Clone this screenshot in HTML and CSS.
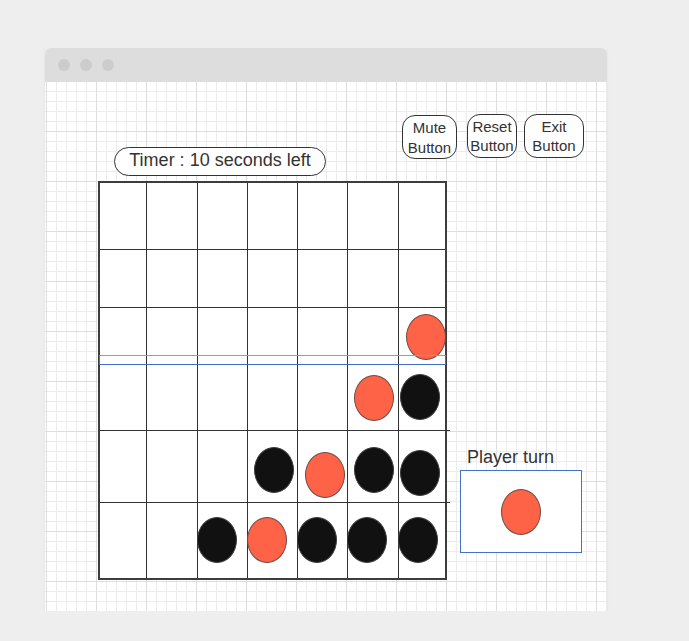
FILE: index.html
```html
<!DOCTYPE html>
<html lang="en">
<head>
  <meta charset="UTF-8">
  <meta name="viewport" content="width=689, initial-scale=1.0">
  <title>Connect Four - Wireframe</title>
  <link rel="stylesheet" href="styles.css">
</head>
<body>
  <div class="window">
    <div class="titlebar">
      <span class="dot"></span>
      <span class="dot"></span>
      <span class="dot"></span>
    </div>
    <div class="canvas">
      <div class="header">
        <div class="timer">Timer : 10 seconds left</div>
        <div class="actions">
          <button type="button" class="btn mute">Mute<br>Button</button>
          <button type="button" class="btn reset">Reset<br>Button</button>
          <button type="button" class="btn exit">Exit<br>Button</button>
        </div>
      </div>
      <div class="game">
        <div class="board">
          <div class="row r1">
            <div class="cell"></div><div class="cell"></div><div class="cell"></div><div class="cell"></div><div class="cell"></div><div class="cell"></div><div class="cell"></div>
          </div>
          <div class="row r2">
            <div class="cell"></div><div class="cell"></div><div class="cell"></div><div class="cell"></div><div class="cell"></div><div class="cell"></div><div class="cell"></div>
          </div>
          <div class="row r3">
            <div class="cell"></div><div class="cell"></div><div class="cell"></div><div class="cell"></div><div class="cell"></div><div class="cell"></div>
            <div class="cell"><span class="piece red"></span></div>
          </div>
          <div class="row r4">
            <div class="cell"></div><div class="cell"></div><div class="cell"></div><div class="cell"></div><div class="cell"></div>
            <div class="cell"><span class="piece red"></span></div>
            <div class="cell"><span class="piece black edge"></span></div>
          </div>
          <div class="row r5">
            <div class="cell"></div><div class="cell"></div><div class="cell"></div>
            <div class="cell"><span class="piece black"></span></div>
            <div class="cell"><span class="piece red low"></span></div>
            <div class="cell"><span class="piece black"></span></div>
            <div class="cell"><span class="piece black edge"></span></div>
          </div>
          <div class="row r6">
            <div class="cell"></div><div class="cell"></div>
            <div class="cell"><span class="piece black"></span></div>
            <div class="cell"><span class="piece red"></span></div>
            <div class="cell"><span class="piece black"></span></div>
            <div class="cell"><span class="piece black"></span></div>
            <div class="cell"><span class="piece black"></span></div>
          </div>
          <!-- selected drop row -->
          <div class="selection"></div>
        </div>
        <div class="turn">
          <div class="turn-label">Player turn</div>
          <div class="turn-box"><span class="piece red"></span></div>
        </div>
      </div>
    </div>
  </div>
</body>
</html>
```

FILE: styles.css
```css
body {
  margin: 0;
  background: #eeeeee;
  font-family: "Liberation Sans", Arial, Helvetica, sans-serif;
  color: #333;
}
.window {
  width: 562px;
  margin: 48px 0 0 45px;
  box-shadow: 0 1px 2px rgba(0, 0, 0, 0.08);
}
.titlebar {
  height: 33px;
  background: #dddddd;
  border-radius: 6px 6px 0 0;
  display: flex;
  align-items: center;
  gap: 10px;
  padding-left: 13px;
}
.dot {
  width: 12px;
  height: 12px;
  border-radius: 50%;
  background: #cccccc;
}
.canvas {
  height: 530px;
  box-sizing: border-box;
  padding: 33px 23px 0 53px;
  background-color: #fff;
  background-image:
    linear-gradient(to right, #dedede 1px, transparent 1px),
    linear-gradient(to bottom, #dedede 1px, transparent 1px),
    linear-gradient(to right, #ececec 1px, transparent 1px),
    linear-gradient(to bottom, #ececec 1px, transparent 1px);
  background-size: 50px 50px, 50px 50px, 10px 10px, 10px 10px;
  background-position: 1px 0;
}
.header {
  display: flex;
  align-items: flex-start;
}
.timer {
  margin: 33px 0 0 16px;
  width: 212px;
  height: 29px;
  box-sizing: border-box;
  border: 1px solid #333;
  border-radius: 15px;
  background: #fff;
  font-size: 18px;
  line-height: 25px;
  padding-bottom: 2px;
  text-align: center;
}
.actions {
  margin-left: auto;
  display: flex;
  gap: 7px;
}
.btn {
  height: 44px;
  box-sizing: border-box;
  padding: 0;
  border: 1.3px solid #333;
  border-radius: 13px;
  background: #fff;
  color: #333;
  font-family: inherit;
  font-size: 15px;
  line-height: 19.5px;
  text-align: center;
  white-space: nowrap;
}
.btn.mute { width: 55px; margin: 1px 3px 0 0; padding-top: 1px; }
.btn.reset { width: 50px; }
.btn.exit { width: 60px; }

.game {
  display: flex;
  align-items: flex-start;
  margin-top: 5px;
}
.board {
  position: relative;
  width: 349px;
  height: 399px;
  box-sizing: border-box;
  border: 2px solid #3d3d3d;
  background: #fff;
}
.row {
  position: relative;
  display: flex;
  box-sizing: border-box;
}
.row + .row { border-top: 1px solid #333; }
.r1 { height: 66px; }
.r2 { height: 58px; }
.r3 { height: 57px; }
.r4 { height: 66px; }
.r5 { height: 72px; }
.r6 { height: 76px; }
.r5::after, .r6::after {
  content: "";
  position: absolute;
  top: -1px;
  right: -5px;
  width: 5px;
  height: 1px;
  background: #333;
}
.cell {
  box-sizing: border-box;
  flex-shrink: 0;
}
.cell + .cell { border-left: 1px solid #333; }
.cell:nth-child(1) { width: 46px; }
.cell:nth-child(2) { width: 51px; }
.cell:nth-child(3) { width: 50px; }
.cell:nth-child(4) { width: 50px; }
.cell:nth-child(5) { width: 50px; }
.cell:nth-child(6) { width: 51px; }
.cell:nth-child(7) { width: 47px; }

.piece {
  display: block;
  width: 40px;
  height: 46px;
  box-sizing: border-box;
  border-radius: 50%;
  border: 1px solid #3a3a3a;
}
.piece.red { background: #ff6347; border-color: #6e4a44; }
.piece.black { background: #111111; border-color: #3c3c3c; }
.r3 .piece { margin: 6px 0 0 7px; }
.r4 .piece { margin: 10px 0 0 6px; }
.r4 .piece.edge { margin: 9px 0 0 1px; }
.r5 .piece { margin: 16px 0 0 6px; }
.r5 .piece.low { margin: 21px 0 0 7px; }
.r5 .piece.edge { margin: 19px 0 0 1px; }
.r6 .piece { margin: 14px 0 0 -1px; }

.selection {
  position: absolute;
  left: -1px;
  top: 172px;
  width: 347px;
  height: 10px;
  box-sizing: border-box;
  border: 1px solid #3f6cc4;
  border-top-color: #7fa0da;
}

.turn {
  margin: 266px 0 0 13px;
}
.turn-label {
  font-size: 18px;
  line-height: 20px;
  padding-left: 7px;
  margin-bottom: 3px;
}
.turn-box {
  width: 122px;
  height: 83px;
  box-sizing: border-box;
  border: 1px solid #4472c4;
  background: #fff;
  display: flex;
  align-items: center;
  justify-content: center;
}
```
